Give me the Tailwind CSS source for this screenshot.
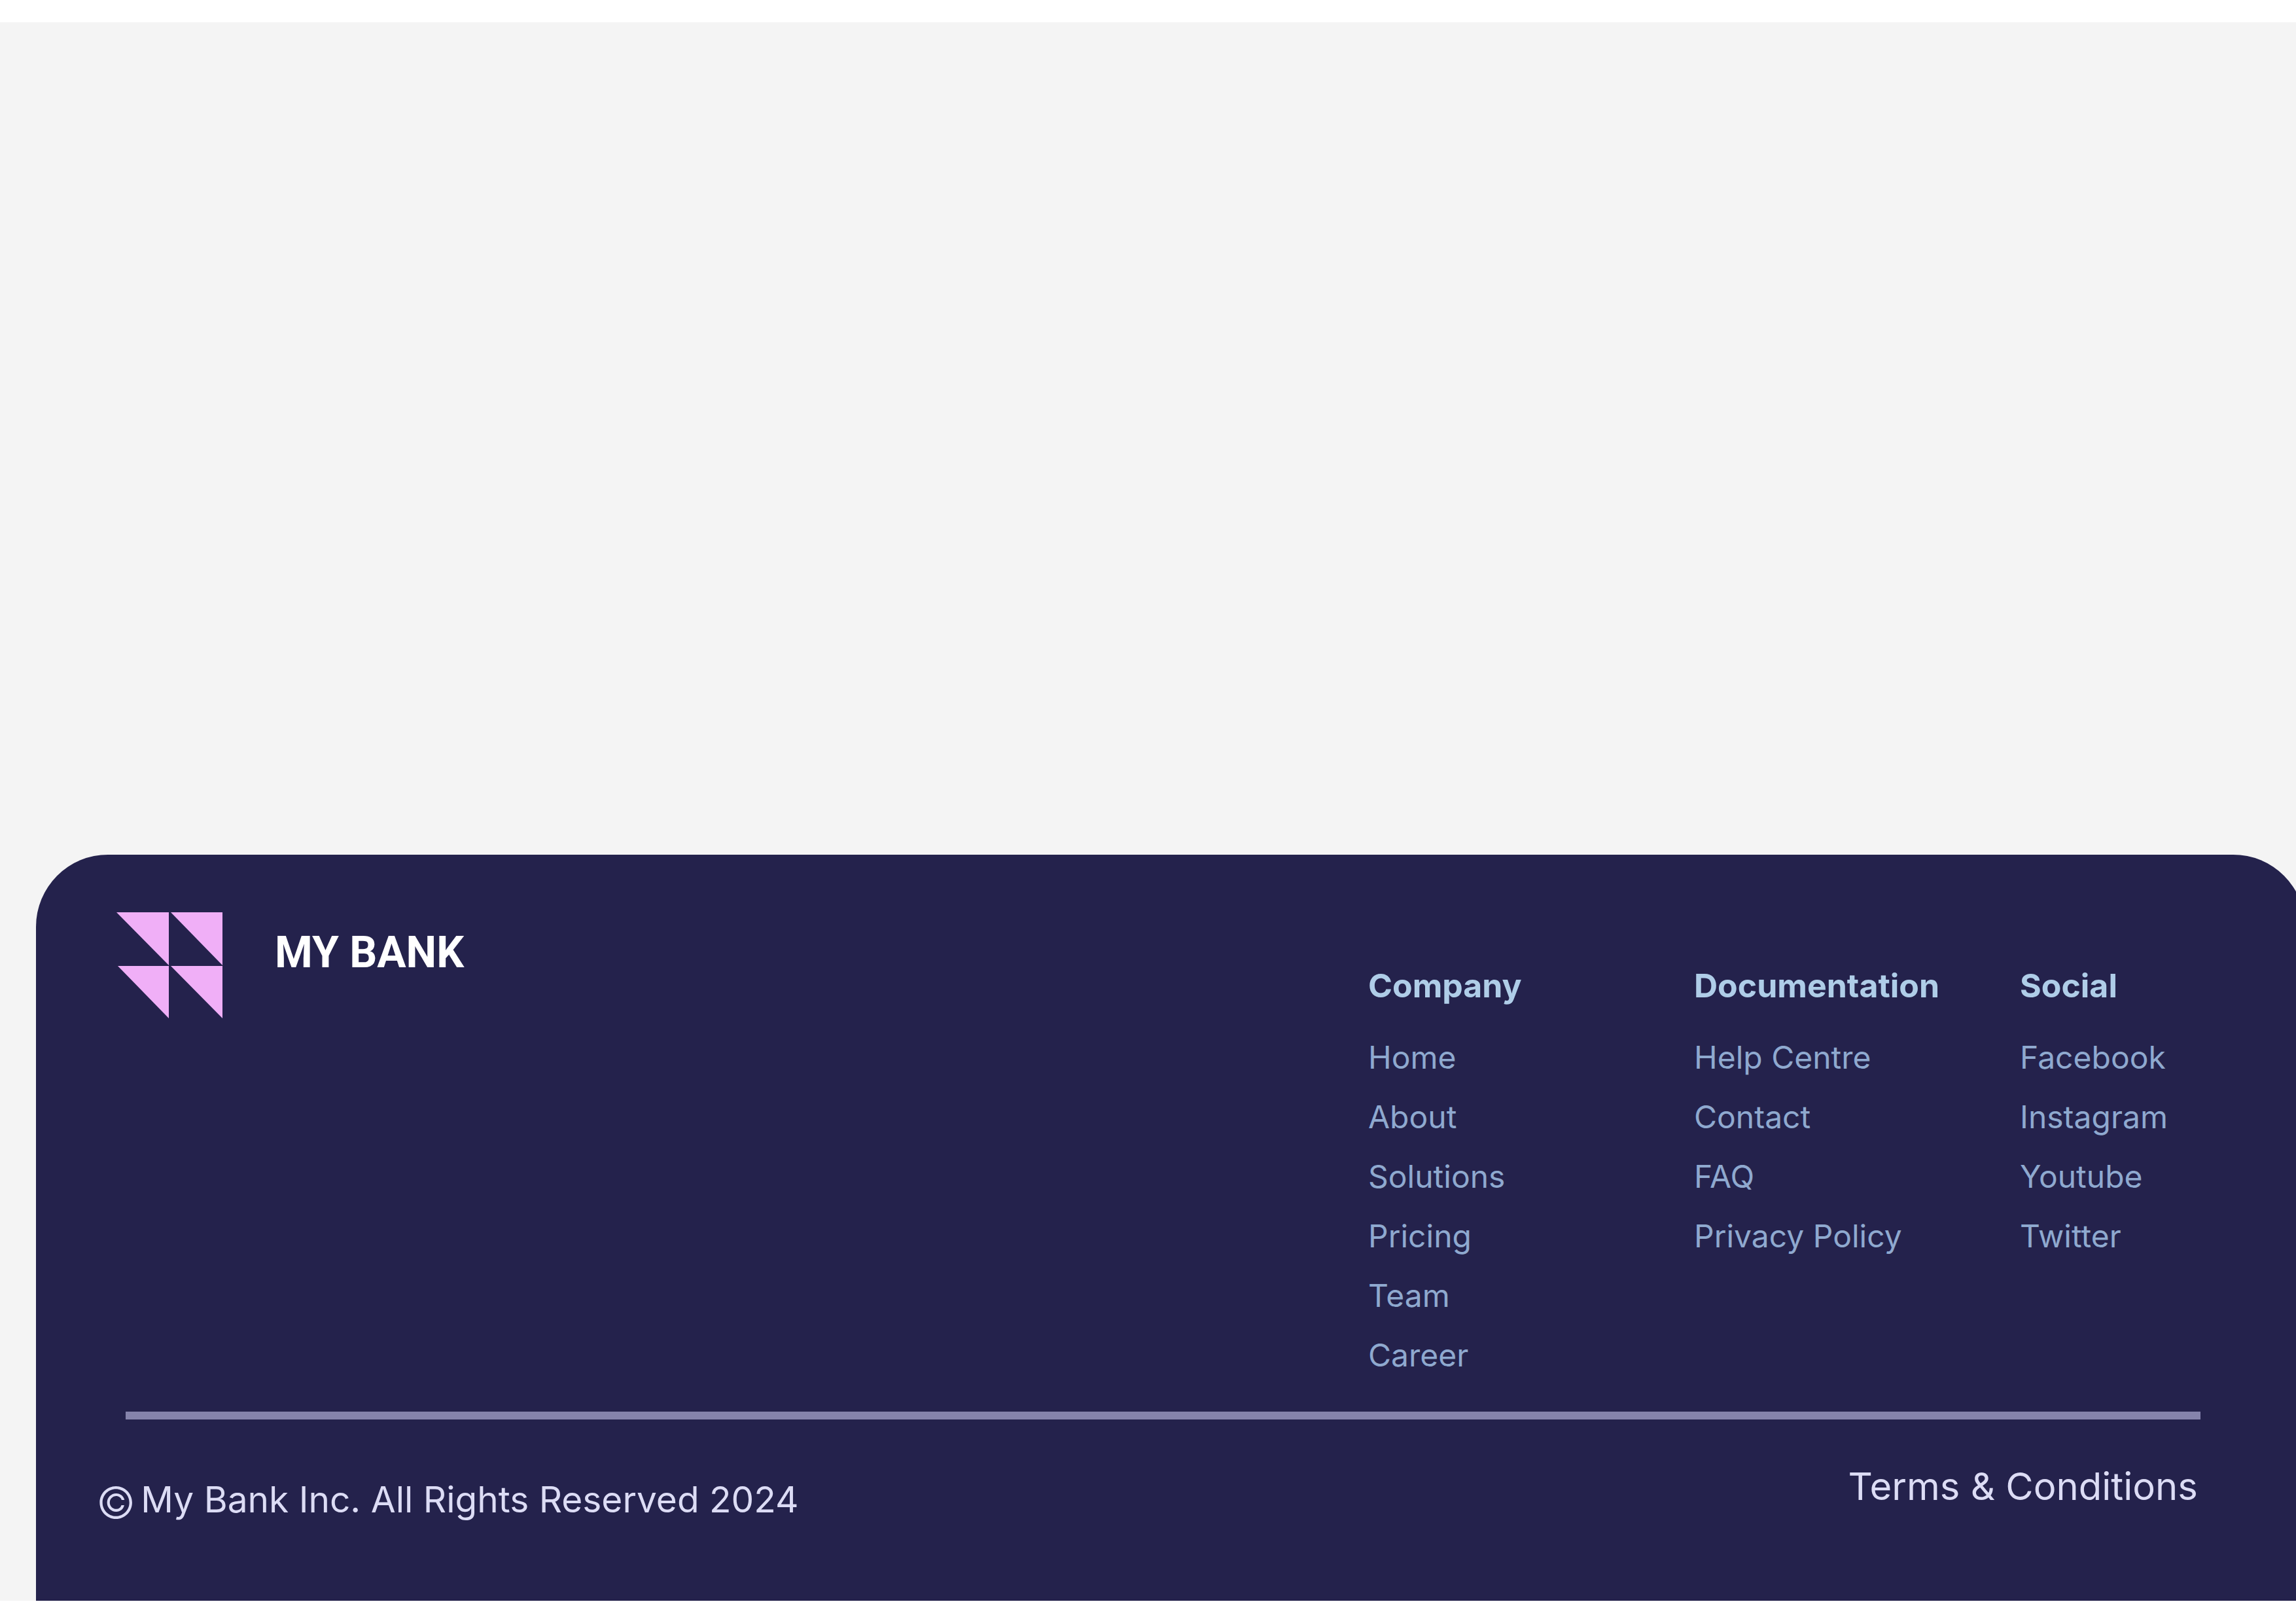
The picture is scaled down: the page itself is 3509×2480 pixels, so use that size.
<!DOCTYPE html>
<html lang="en">
<head>
<meta charset="utf-8">
<title>My Bank</title>
<script src="https://cdn.jsdelivr.net/npm/@tailwindcss/browser@4"></script>
</head>
<body class="bg-white font-['Inter','Open_Sans',sans-serif]">
<div class="flex min-h-screen flex-col py-[34px]">
  <main class="flex flex-1 flex-col justify-end overflow-hidden bg-[#f4f4f4]">
    <footer class="-mr-[14px] ml-[55px] rounded-t-[110px] bg-[#24224c] pt-[88px] pr-[164px] pb-[113px]">
      <div class="flex items-start justify-between pl-[123px]">
        <a href="#" class="flex items-start gap-20">
          <svg class="size-[162px]" viewBox="0 0 162 162" fill="#f0aff7" aria-hidden="true">
            <path d="M0 0H80V81ZM83 0H162V81ZM2 82H80V162ZM83 82H162V162Z"/>
          </svg>
          <span class="mt-[26px] font-['Roboto','Inter',sans-serif] text-[66px] leading-[72px] font-bold text-white">MY BANK</span>
        </a>
        <nav class="mt-20 grid grid-cols-[498px_498px_272px] text-[48px] text-[#8fa9cf]">
          <div>
            <h2 class="text-[50px] leading-[64px] font-bold text-[#afcde8]">Company</h2>
            <ul class="mt-8 leading-[91px]">
              <li><a href="#">Home</a></li>
              <li><a href="#">About</a></li>
              <li><a href="#">Solutions</a></li>
              <li><a href="#">Pricing</a></li>
              <li><a href="#">Team</a></li>
              <li><a href="#">Career</a></li>
            </ul>
          </div>
          <div>
            <h2 class="text-[50px] leading-[64px] font-bold text-[#afcde8]">Documentation</h2>
            <ul class="mt-8 leading-[91px]">
              <li><a href="#">Help Centre</a></li>
              <li><a href="#">Contact</a></li>
              <li><a href="#">FAQ</a></li>
              <li><a href="#">Privacy Policy</a></li>
            </ul>
          </div>
          <div>
            <h2 class="text-[50px] leading-[64px] font-bold text-[#afcde8]">Social</h2>
            <ul class="mt-8 leading-[91px]">
              <li><a href="#">Facebook</a></li>
              <li><a href="#">Instagram</a></li>
              <li><a href="#">Youtube</a></li>
              <li><a href="#">Twitter</a></li>
            </ul>
          </div>
        </nav>
      </div>
      <hr class="mt-[41px] -mr-1 ml-[137px] h-3 border-0 bg-[#8583ab]">
      <div class="flex items-start justify-between pt-[70px] pl-[92px] leading-[64px] text-[#dcdcf5]">
        <p class="mt-5 flex items-start gap-2 text-[55px]">
          <span class="text-[66px] leading-[74px] font-light">©</span>
          <span>My Bank Inc. All Rights Reserved 2024</span>
        </p>
        <a href="#" class="text-[58px]">Terms &amp; Conditions</a>
      </div>
    </footer>
  </main>
</div>
</body>
</html>
